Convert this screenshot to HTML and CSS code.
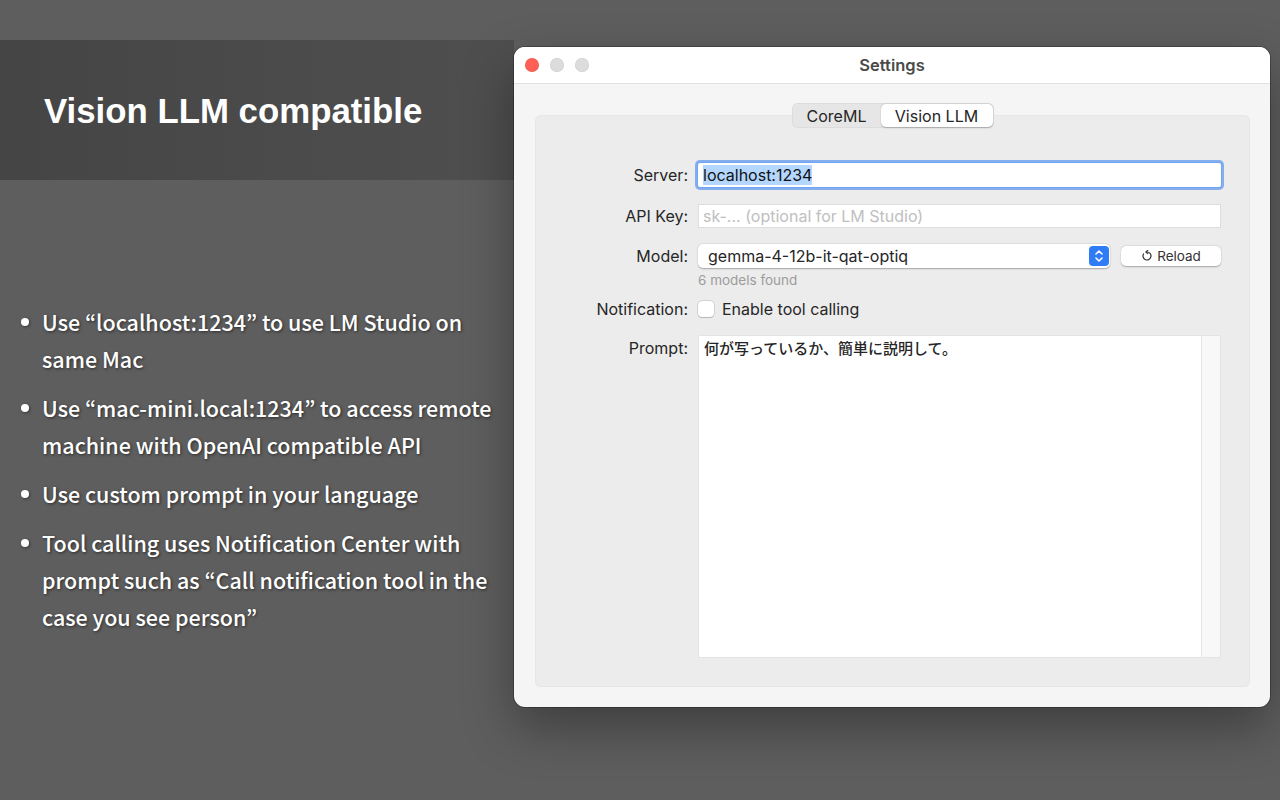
FILE: index.html
```html
<!DOCTYPE html>
<html>
  <head>
    <title>Vision LLM compatible</title>
    <link rel="stylesheet" href="styles.css">
  </head>
  <body>
    <div class="page">
      <div class="left">
        <div class="band">
          <h1>Vision LLM compatible</h1>
        </div>
        <ul class="points">
          <li>Use “localhost:1234” to use LM Studio on same Mac</li>
          <li>Use “mac-mini.local:1234” to access remote machine with OpenAI compatible API</li>
          <li>Use custom prompt in your language</li>
          <li>Tool calling uses Notification Center with prompt such as “Call notification tool in the case you see person”</li>
        </ul>
      </div>

      <div class="window">
        <div class="titlebar">
          <div class="lights">
            <span class="light red"></span>
            <span class="light"></span>
            <span class="light"></span>
          </div>
          <div class="wintitle">Settings</div>
        </div>
        <div class="content">
          <div class="tabs">
            <span class="tab">CoreML</span>
            <span class="tab selected">Vision LLM</span>
          </div>
          <div class="group">
            <div class="row">
              <label>Server:</label>
              <div class="field focus"><span class="sel">localhost:1234</span></div>
            </div>
            <div class="row r-api">
              <label>API Key:</label>
              <div class="field plain"><span class="placeholder">sk-... (optional for LM Studio)</span></div>
            </div>
            <div class="row r-model">
              <label>Model:</label>
              <div class="popup">
                <span class="popup-text">gemma-4-12b-it-qat-optiq</span>
                <span class="stepper">
                  <svg width="10" height="16" viewBox="0 0 10 16"><path d="M2 6 L5 3 L8 6 M2 10 L5 13 L8 10" fill="none" stroke="#fff" stroke-width="1.6" stroke-linecap="round" stroke-linejoin="round"/></svg>
                </span>
              </div>
              <div class="button">
                <svg width="12" height="12" viewBox="0 0 12 12"><path d="M6 2 A4 4 0 1 1 2.6 3.9" fill="none" stroke="#333" stroke-width="1.2" stroke-linecap="round"/><path d="M6.8 0.4 L4.9 2 L6.8 3.6" fill="none" stroke="#333" stroke-width="1.2" stroke-linecap="round" stroke-linejoin="round"/></svg>
                Reload
              </div>
            </div>
            <div class="row r-hint">
              <label></label>
              <div class="hint">6 models found</div>
            </div>
            <div class="row r-notif">
              <label>Notification:</label>
              <div class="check"><span class="box"></span>Enable tool calling</div>
            </div>
            <div class="row r-prompt">
              <label>Prompt:</label>
              <div class="textarea">
                <div class="text">何が写っているか、簡単に説明して。</div>
                <div class="scrolltrack"></div>
              </div>
            </div>
          </div>
        </div>
      </div>
    </div>
  </body>
</html>
```

FILE: styles.css
```css
body {
	margin: 0;
	background: #5e5e5e;
	font-family: "Liberation Sans", Arial, sans-serif;
}

.page {
	display: flex;
	height: 800px;
	overflow: hidden;
}

.left {
	width: 514px;
	flex-shrink: 0;
	padding-top: 40px;
}

.band {
	height: 140px;
	width: 514px;
	background: linear-gradient(to right, #454545, #4f4f4f);
	display: flex;
	align-items: center;
	padding-left: 44px;
	box-sizing: border-box;
}

.band h1 {
	margin: 0;
	color: #ffffff;
	font-size: 34.8px;
	font-weight: bold;
	padding-top: 2px;
}

.points {
	list-style: none;
	margin: 123px 0 0 0;
	padding: 0 0 0 42px;
	color: #ffffff;
	font-family: "Noto Sans CJK JP", "Noto Sans", sans-serif;
	font-weight: 500;
	font-size: 21.5px;
	line-height: 37px;
	text-shadow: 1px 1px 3px rgba(0, 0, 0, 0.55);
}

.points li {
	position: relative;
	margin-bottom: 12px;
	padding-right: 6px;
}

.points li::before {
	content: "";
	position: absolute;
	left: -21px;
	top: 15px;
	width: 8px;
	height: 8px;
	border-radius: 50%;
	background: #ffffff;
	box-shadow: 1px 1px 3px rgba(0, 0, 0, 0.4);
}

/* settings window */
.window {
	margin-top: 47px;
	width: 756px;
	height: 660px;
	flex-shrink: 0;
	background: #f5f5f5;
	border-radius: 11px;
	box-shadow: 0 0 0 1px rgba(0, 0, 0, 0.25), 0 20px 50px rgba(0, 0, 0, 0.35);
	overflow: hidden;
	font-family: Inter, "Noto Sans CJK JP", sans-serif;
	font-size: 16px;
	color: #262626;
	display: flex;
	flex-direction: column;
}

.titlebar {
	height: 36px;
	background: #ffffff;
	border-bottom: 1px solid #e2e2e2;
	display: flex;
	align-items: center;
	position: relative;
	flex-shrink: 0;
}

.lights {
	display: flex;
	gap: 11px;
	padding-left: 11px;
}

.light {
	width: 14px;
	height: 14px;
	border-radius: 50%;
	background: #dcdcdc;
	box-shadow: inset 0 0 0 0.5px rgba(0, 0, 0, 0.08);
}

.light.red {
	background: #fe5f57;
}

.wintitle {
	position: absolute;
	left: 0;
	right: 0;
	text-align: center;
	font-weight: 600;
	font-size: 16.5px;
	color: #4a4a4a;
}

.content {
	flex: 1;
	padding: 19px 20px 20px 21px;
	display: flex;
	flex-direction: column;
}

.tabs {
	align-self: center;
	display: flex;
	background: #e6e6e6;
	border-radius: 6px;
	padding: 1px;
	height: 23px;
	margin-bottom: -13px;
	position: relative;
	z-index: 1;
	box-shadow: inset 0 0 0 0.5px rgba(0, 0, 0, 0.08);
}

.tab {
	display: flex;
	align-items: center;
	justify-content: center;
	font-size: 16px;
	color: #262626;
	border-radius: 5px;
	width: 88px;
}

.tab.selected {
	background: #ffffff;
	box-shadow: 0 0.5px 1.5px rgba(0, 0, 0, 0.25);
	width: 112px;
}

.group {
	flex: 1;
	background: #ececec;
	border-radius: 6px;
	box-shadow: inset 0 0 0 1px #e6e6e6;
	padding: 48px 29px 0 0;
}

.row {
	display: flex;
	align-items: center;
	gap: 10px;
}

.row label {
	width: 153px;
	flex-shrink: 0;
	text-align: right;
	color: #262626;
}

.field {
	flex: 1;
	height: 24px;
	background: #ffffff;
	display: flex;
	align-items: center;
	padding-left: 5px;
	box-sizing: border-box;
}

.field.focus {
	box-shadow: 0 0 0 1px #6ea5f4, 0 0 0 3px rgba(99, 153, 240, 0.75);
	border-radius: 2px;
}

.sel {
	background: #b3d7ff;
	color: #111;
}

.field.plain {
	box-shadow: inset 0 0 0 1px #dedede;
}

.placeholder {
	color: #c0c0c0;
}

.r-api {
	margin-top: 17px;
}

.r-model {
	margin-top: 16px;
}

.popup {
	flex: 1;
	height: 24px;
	background: #ffffff;
	border-radius: 5px;
	box-shadow: 0 0.5px 1.5px rgba(0, 0, 0, 0.3);
	display: flex;
	align-items: center;
	justify-content: space-between;
	padding: 0 1px 0 10px;
}

.stepper {
	width: 20px;
	height: 20px;
	border-radius: 4px;
	background: #2f7cf6;
	display: flex;
	align-items: center;
	justify-content: center;
}

.button {
	width: 100px;
	height: 20px;
	margin-left: 1px;
	background: #ffffff;
	border-radius: 5px;
	box-shadow: 0 0.5px 1.5px rgba(0, 0, 0, 0.3);
	display: flex;
	align-items: center;
	justify-content: center;
	gap: 4px;
	font-size: 13.5px;
	color: #333;
}

.r-hint {
	margin-top: 4px;
}

.hint {
	font-size: 13.5px;
	color: #9c9c9c;
	line-height: 16px;
}

.r-notif {
	margin-top: 11px;
	height: 20px;
}

.check {
	display: flex;
	align-items: center;
	gap: 8px;
}

.box {
	width: 16px;
	height: 16px;
	background: #ffffff;
	border-radius: 4px;
	box-shadow: 0 0 0 0.5px rgba(0, 0, 0, 0.2), 0 0.5px 1px rgba(0, 0, 0, 0.15);
}

.r-prompt {
	margin-top: 16px;
	align-items: flex-start;
}

.r-prompt label {
	padding-top: 3px;
}

.textarea {
	flex: 1;
	height: 323px;
	background: #ffffff;
	box-shadow: inset 0 0 0 1px #e4e4e4;
	display: flex;
}

.textarea .text {
	flex: 1;
	padding: 2px 6px;
	font-size: 15px;
	font-weight: 500;
	font-family: "Noto Sans CJK JP", sans-serif;
}

.scrolltrack {
	width: 18px;
	background: #f8f8f8;
	border-left: 1px solid #e6e6e6;
	margin: 1px 1px 1px 0;
}
```
